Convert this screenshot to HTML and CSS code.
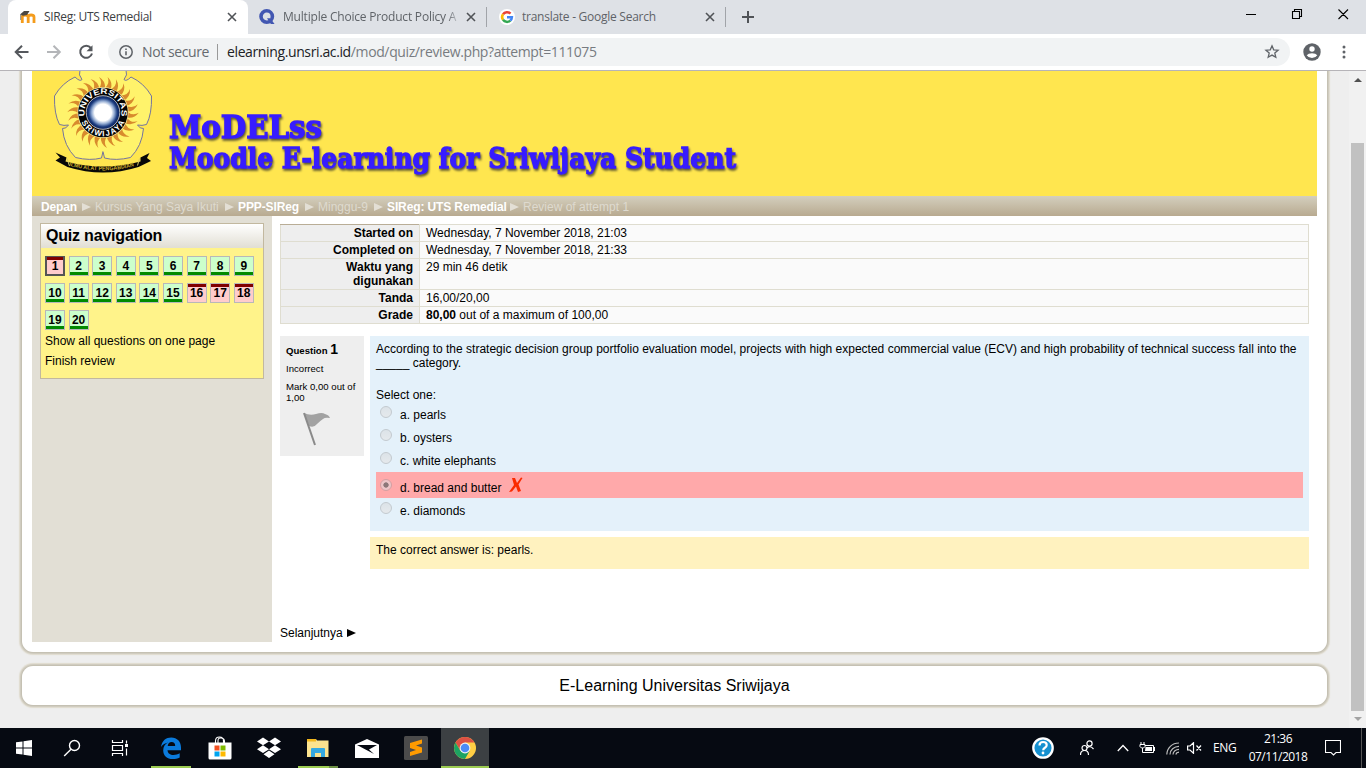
FILE: index.html
```html
<!DOCTYPE html>
<html lang="en">
<head>
<meta charset="utf-8">
<title>SIReg: UTS Remedial</title>
<link rel="stylesheet" href="styles.css">
</head>
<body>
<div class="tabstrip">
  <div class="tab active">
    <svg class="fav" width="16" height="16" viewBox="0 0 16 16"><path d="M2.300 14V8q0-2 2.900-2T8.200 8v6M8.200 14V8q0-2 2.900-2t2.900 2v6" fill="none" stroke="#f49c1c" stroke-width="2.800"/><path d="M0 5.500L4 2l5.500 0L7 6l-4 .8z" fill="#4b4742"/><path d="M.700 5v6" stroke="#888"/></svg>
    <span class="tab-title t1">SIReg: UTS Remedial</span>
    <svg class="x" width="10" height="10" viewBox="0 0 10 10"><path d="M1 1l8 8M9 1L1 9"/></svg>
  </div>
  <div class="tab second">
    <svg class="fav" width="16" height="16" viewBox="0 0 16 16"><circle cx="7.7" cy="7.5" r="5.7" fill="none" stroke="#4257b2" stroke-width="3.6"/><path d="M8 9.2h3.2l4.400 5.800h-3.800z" fill="#4257b2"/></svg>
    <span class="tab-title t2">Multiple Choice Product Policy A</span>
    <svg class="x" width="10" height="10" viewBox="0 0 10 10"><path d="M1 1l8 8M9 1L1 9"/></svg>
  </div>
  <div class="tab third">
    <svg class="fav" width="16" height="16" viewBox="0 0 16 16"><circle cx="8" cy="8" r="8" fill="#fff"/><g fill="none" stroke-width="2.5"><path d="M4 5.2A4.9 4.9 0 0 1 11.5 4.6" stroke="#ea4335"/><path d="M4 5.2a5 5 0 0 0 0 5.6" stroke="#fbbc05"/><path d="M4 10.8a4.9 4.9 0 0 0 7.3.8" stroke="#34a853"/><path d="M8 8.2h4.9a4.8 4.8 0 0 1-1.6 3.4" stroke="#4285f4"/></g></svg>
    <span class="tab-title t3">translate - Google Search</span>
    <svg class="x" width="10" height="10" viewBox="0 0 10 10"><path d="M1 1l8 8M9 1L1 9"/></svg>
  </div>
  <svg class="plus" width="12" height="12" viewBox="0 0 12 12"><path d="M6 0v12M0 6h12" stroke="#505357" stroke-width="2"/></svg>
  <svg class="winctl" width="108" height="12" viewBox="0 0 108 12"><path d="M0 6.500h10M46.500 3.500h7v7h-7zM48.500 3.500v-2h7v7h-2M92.500 1.500l9.500 9.500M102 1.500L92.500 11" fill="none" stroke="#000" stroke-width="1.100"/></svg>
</div>
<div class="toolbar">
  <svg class="navs" width="82" height="18" viewBox="0 0 82 18" fill="none" stroke-width="2"><path d="M14.500 9H2M8 2.700L1.700 9 8 15.300" stroke="#55585d"/><path d="M33 9h12.500M39.500 2.700L45.800 9l-6.300 6.300" stroke="#b4b6b9"/><path d="M76.900 5A6 6 0 1 0 78 10.500" stroke="#55585d"/><path d="M78.500 2.200v6h-6z" fill="#55585d"/></svg>
  <div class="omnibox">
    <svg class="info" width="16" height="16" viewBox="0 0 16 16"><circle cx="8" cy="8" r="6.200" fill="none" stroke="#5f6368" stroke-width="1.500"/><path d="M8 7.200v4M8 4.500v1.600" stroke="#5f6368" stroke-width="1.600"/></svg>
    <span class="secure">Not secure</span><i class="sep"></i>
    <span class="url"><b>elearning.unsri.ac.id</b>/mod/quiz/review.php?attempt=111075</span>
    <svg class="star" width="16" height="16" viewBox="0 0 16 16"><path d="M8 1.800l1.700 4 4.400.4-3.300 2.900 1 4.200L8 11.100l-3.800 2.200 1-4.200L1.900 6.200l4.400-.4z" fill="none" stroke="#5f6368" stroke-width="1.300"/></svg>
  </div>
  <svg class="user" width="18" height="18" viewBox="0 0 18 18"><circle cx="9" cy="9" r="8.700" fill="#5f6368"/><circle cx="9" cy="6" r="2.700" fill="#fff"/><path d="M3.700 12.200q1.500-2 5.300-2t5.300 2q-1.800 2.800-5.300 2.800t-5.300-2.800z" fill="#fff"/></svg>
  <svg class="dots" width="4" height="14" viewBox="0 0 4 14" fill="#5f6368"><circle cx="2" cy="2" r="1.500"/><circle cx="2" cy="7" r="1.500"/><circle cx="2" cy="12" r="1.500"/></svg>
</div>
<div class="view">
  <div class="page">
    <div class="card main">
      <svg class="banner" width="1285" height="125" viewBox="32 71 1285 125">
        <defs><radialGradient id="sun"><stop offset="0" stop-color="#fff"/><stop offset=".5" stop-color="#fff"/><stop offset=".68" stop-color="#8fa8d0"/><stop offset=".85" stop-color="#1b3c80"/><stop offset="1" stop-color="#0b2058"/></radialGradient>
        <path id="arcTop" d="M85.600 118.800A18.500 18.500 0 1 1 120.400 118.800"/><path id="arcBot" d="M79.300 112.500A23.700 23.700 0 0 0 126.700 112.500"/><path id="motto" d="M69 165.500Q103 175.500 138 165"/>
        <path id="petals" d="M80 70Q78 75 82 79.500 80 82 75 77 62 83 54.500 96 54 114 59.500 124.500 64 126 68.500 125 66 129 62.500 128.500 64 146 75.500 157.500 90 161 101.500 158L103 151.500"/></defs>
        <g id="half"><path d="M103 70H80Q78 75 82 79.500 80 82 75 77 62 83 54.500 96 54 114 59.500 124.500 64 126 68.500 125 66 129 62.500 128.500 64 146 75.500 157.500 90 161 101.500 158L103.200 151.500V70z" fill="#fff36b"/><use href="#petals" fill="none" stroke="#74749f"/></g>
        <use href="#half" transform="translate(206 0) scale(-1 1)"/>
        <g fill="#d88b2d"><g id="r4"><g id="r1"><path id="ray" d="M98.500 89q5-6 .500-12 7 4 6 12z"/><use href="#ray" transform="rotate(13.850 103 112.500)"/></g><use href="#r1" transform="rotate(27.700 103 112.500)"/></g><use href="#r4" transform="rotate(55.400 103 112.500)"/><use href="#r4" transform="rotate(110.800 103 112.500)"/><use href="#r4" transform="rotate(166.200 103 112.500)"/><use href="#r4" transform="rotate(221.600 103 112.500)"/><use href="#r4" transform="rotate(277 103 112.500)"/><use href="#r1" transform="rotate(332.400 103 112.500)"/></g>
        <circle cx="103" cy="112.500" r="25.500" fill="#fff3a0"/><circle cx="103" cy="112.500" r="24.800" fill="#050505"/><circle cx="103" cy="112.500" r="16.800" fill="url(#sun)" stroke="#ddd" stroke-width=".8"/>
        <g class="seal"><text><textPath href="#arcTop" startOffset="50%" text-anchor="middle" textLength="65" lengthAdjust="spacingAndGlyphs">UNIVERSITAS</textPath></text><text><textPath href="#arcBot" startOffset="50%" text-anchor="middle" textLength="54">SRIWIJAYA</textPath></text></g>
        <path d="M55.500 152.500l11 5-1 4q37.500 10 75 0v-4l9-4.500-2.500 5 4 3-12.500 6q-35.500 11-71 0l-12-6.500 4.500-3z" fill="#080808"/><path d="M67 158.500l2.500 7.500M139.500 158.500l-2 7" stroke="#d7ca69"/>
        <text class="motto"><textPath href="#motto" textLength="66" lengthAdjust="spacingAndGlyphs">ILMU ALAT PENGABDIAN</textPath></text>
        <g class="brand"><text x="169" y="138" font-size="31" textLength="153" lengthAdjust="spacingAndGlyphs">MoDELss</text><text x="169" y="168" font-size="28" textLength="567" lengthAdjust="spacingAndGlyphs">Moodle E-learning for Sriwijaya Student</text></g>
      </svg>
      <nav class="crumbs"><b class="c1">Depan</b><i></i><span class="c2">Kursus Yang Saya Ikuti</span><i></i><b class="c3">PPP-SIReg</b><i></i><span class="c4">Minggu-9</span><i></i><b class="c5">SIReg: UTS Remedial</b><i></i><span class="c6">Review of attempt 1</span></nav>
      <div class="cols">
        <aside>
          <div class="block">
            <h2>Quiz navigation</h2>
            <div class="blockbody">
              <div class="qn"><a class="bad cur">1</a><a>2</a><a>3</a><a>4</a><a>5</a><a>6</a><a>7</a><a>8</a><a>9</a><a>10</a><a>11</a><a>12</a><a>13</a><a>14</a><a>15</a><a class="bad">16</a><a class="bad">17</a><a class="bad">18</a><a>19</a><a>20</a></div>
              <div class="lnk">Show all questions on one page</div>
              <div class="lnk">Finish review</div>
            </div>
          </div>
        </aside>
        <main>
          <table>
            <tr><th>Started on</th><td>Wednesday, 7 November 2018, 21:03</td></tr>
            <tr><th>Completed on</th><td>Wednesday, 7 November 2018, 21:33</td></tr>
            <tr><th>Waktu yang<br>digunakan</th><td>29 min 46 detik</td></tr>
            <tr><th>Tanda</th><td>16,00/20,00</td></tr>
            <tr><th>Grade</th><td><b>80,00</b> out of a maximum of 100,00</td></tr>
          </table>
          <div class="question">
            <div class="qinfo">
              <div class="qno">Question <span>1</span></div>
              <div class="state">Incorrect</div>
              <div class="mark">Mark 0,00 out of<br>1,00</div>
              <svg class="flag" width="30" height="34" viewBox="0 0 30 34"><path d="M2 1q6 3 12 1 6-2 9 0 4 1 5 4-5-1-7 1-3 2-6 5-3 4-8 2z" fill="#a2a2a2"/><path d="M2 1l11 32" stroke="#8a8a8a" stroke-width="2"/></svg>
            </div>
            <div class="qbody">
              <div class="formulation">
                <p><span class="qtext">According to the strategic decision group portfolio evaluation model, projects with high expected commercial value (ECV) and high probability of technical success fall into the</span><br>_____ category.</p>
                <div class="select">Select one:</div>
                <div class="opt"><i class="radio"></i><span>a. pearls</span></div>
                <div class="opt"><i class="radio"></i><span>b. oysters</span></div>
                <div class="opt"><i class="radio"></i><span>c. white elephants</span></div>
                <div class="opt wrong"><i class="radio on"></i><span>d. bread and butter</span><svg class="cross" width="14" height="16" viewBox="0 0 14 16"><path d="M3 1h3l2 5 4-5.500 1.500.5-4 6.500 2.500 6.500-3 1-2-5.500L3 14.500l-3 .5 5-7z" fill="#fa2b00"/></svg></div>
                <div class="opt last"><i class="radio"></i><span>e. diamonds</span></div>
              </div>
              <div class="outcome">The correct answer is: pearls.</div>
            </div>
          </div>
          <div class="next">Selanjutnya <i></i></div>
        </main>
      </div>
    </div>
    <div class="card foot"><span>E-Learning Universitas Sriwijaya</span></div>
  </div>
  <div class="scroll"><i class="up"></i><div class="thumb"></div><i class="down"></i></div>
</div>
<footer class="taskbar">
  <div class="app"><svg width="16" height="16" viewBox="0 0 16 16" fill="#fff"><path d="M0 2.300L6.500 1.400V7.500H0zM7.500 1.200L16 0v7.500H7.500zM0 8.500h6.500v6.100L0 13.700zM7.500 8.500H16V16l-8.500-1.200z"/></svg></div>
  <div class="app"><svg width="18" height="18" viewBox="0 0 18 18" fill="none" stroke="#fff" stroke-width="1.400"><circle cx="11.500" cy="6.500" r="5"/><path d="M8 10.200L1.200 17"/></svg></div>
  <div class="app"><svg width="18" height="18" viewBox="0 0 18 18" fill="none" stroke="#fff" stroke-width="1.200"><path d="M1.500 1v2.500h10V1M1.500 17v-2.500h10V17M1.500 6.500h10v5h-10zM15.500 1.500v3M15.500 9.500v7"/><path d="M14 5h3v3h-3z" fill="#fff" stroke="none"/></svg></div>
  <div class="app edge on"><svg width="22" height="22" viewBox="0 0 22 22"><path d="M1 10C2 3.500 6 .5 11.200.5c6 0 9.800 4.300 9.800 10v2.700H7.500c.2 3.200 2.700 4.700 6 4.700 2.300 0 4.300-.6 6.200-1.700v4.300c-2 1.100-4.500 1.500-7 1.500-5.700 0-9.500-3.400-9.500-8.600 0-3.600 1.900-6.300 4.900-7.800C5 6.300 2.800 7.700 1 10zM7.700 9h7.500c0-2.600-1.300-4-3.600-4-2.200 0-3.500 1.500-3.900 4z" fill="#0b7bdc"/></svg></div>
  <div class="app store"><svg width="24" height="24" viewBox="0 0 24 24"><path d="M7.500 7V5q0-4 4-4t4 4v2M10 7V4.500q0-3 3.500-2.500 3 .5 3 3.500V7" fill="none" stroke="#fff" stroke-width="1.100"/><path d="M.5 6.500h23V22q0 1.500-1.500 1.500H2Q.5 23.500.5 22z" fill="#fff"/><path fill="#f25022" d="M6.500 9.500h5v5h-5z"/><path fill="#7fba00" d="M12.500 9.500h5v5h-5z"/><path fill="#00a4ef" d="M6.500 15.500h5v5h-5z"/><path fill="#ffb900" d="M12.500 15.500h5v5h-5z"/></svg></div>
  <div class="app drop"><svg width="24" height="22" viewBox="0 0 24 22" fill="#fff"><path d="M6 .5l6 3.900-6 3.900L0 4.400zM18 .5l6 3.900-6 3.900-6-3.900zM6 8.300l6 3.900-6 3.900-6-3.900zM18 8.300l6 3.900-6 3.900-6-3.900zM12 13.500l5.500 3.800L12 21l-5.500-3.700z"/></svg></div>
  <div class="app files on"><svg width="22" height="19" viewBox="0 0 22 19"><path d="M0 0h9l1 1.500h11.500V18H0z" fill="#fce38f"/><path d="M0 0h9v2.500H0z" fill="#f2b71d"/><path d="M4 18v-8q0-1 1-1h12q1 0 1 1v8h-4v-4H8v4z" fill="#35a9e1"/></svg></div>
  <div class="app mail"><svg width="24" height="19" viewBox="0 0 24 19"><path d="M0 5.500L12 0l12 5.500V19H0z" fill="#fff"/><path d="M2 6H22L14 10.500l5 4.500z" fill="#060a12"/></svg></div>
  <div class="app subl"><svg width="24" height="24" viewBox="0 0 24 24"><rect width="24" height="24" rx="1.500" fill="#4b4b4b"/><path d="M6 7l12-3.500v4L12 9.500l6 2V16.500L6 20v-4l6-2-6-2z" fill="#ff9b00"/></svg></div>
  <div class="app chrome on"><svg width="22" height="22" viewBox="0 0 22 22"><circle cx="11" cy="11" r="11" fill="#ffce44"/><path d="M1.500 5.500A11 11 0 0 1 20.500 5.500H11L6.300 13.500z" fill="#dd5144"/><path d="M1.500 5.500A11 11 0 0 0 11 22l4.700-8.300-4.700 2.300-4.800-2.600z" fill="#1da362"/><circle cx="11" cy="11" r="5.400" fill="#f1f1f1"/><circle cx="11" cy="11" r="4.300" fill="#4c8bf5"/></svg></div>
  <div class="tray">
    <svg class="help" width="22" height="22" viewBox="0 0 22 22"><circle cx="11" cy="11" r="9.700" fill="#1590d0" stroke="#fff" stroke-width="2.300"/><path d="M7.500 8.500q0-3.500 3.600-3.500t3.600 3q0 1.700-1.800 2.800-1.700 1-1.700 2.500" fill="none" stroke="#fff" stroke-width="2.200"/><circle cx="11" cy="16" r="1.400" fill="#fff"/></svg>
    <svg class="people" width="15" height="16" viewBox="0 0 15 16" fill="none" stroke="#fff" stroke-width="1.200"><circle cx="9.500" cy="3.500" r="2.600"/><path d="M7 8q3-3 6.500 1"/><circle cx="4.500" cy="8" r="2.500"/><path d="M.5 15q0-4.500 4-4.500t4 4.500"/></svg>
    <svg class="chev" width="12" height="8" viewBox="0 0 12 8"><path d="M.8 7L6 1.500 11.200 7" fill="none" stroke="#fff" stroke-width="1.300"/></svg>
    <svg class="bat" width="16" height="12" viewBox="0 0 16 12"><path d="M2 0v2M5 0v2M1 2.500h5v2l-1.500 1.500h-2L1 4.500zM3.500 6v4.500M6 3.500h8.500v7H3.500M15.500 5v4" fill="none" stroke="#fff"/><path d="M6.500 5H13v4H6z" fill="#fff"/></svg>
    <svg class="wifi" width="14" height="13" viewBox="0 0 14 13" fill="none" stroke="#bbb" stroke-width="1.200"><path d="M.8 12.500C1 6 6 1 13 1M4 12.500C4 8 8 4.300 13 4.300M7 12.500c0-3 3-5.200 6-5.200M9.800 12.500q.5-2 3.200-2.300"/></svg>
    <svg class="vol" width="15" height="12" viewBox="0 0 15 12" fill="none" stroke="#fff" stroke-width="1.200"><path d="M.6 4H3l3.500-3.300v10.600L3 8H.6zM9.500 3.500l4.500 5M14 3.500l-4.500 5"/></svg>
    <span class="eng">ENG</span>
    <div class="clock"><span>21:36</span><span>07/11/2018</span></div>
    <svg class="note" width="16" height="16" viewBox="0 0 16 16"><path d="M.5.5h15v12H11L8.500 15 6 12.500H.5z" fill="none" stroke="#fff" stroke-width="1.100"/></svg>
  </div>
</footer>
</body>
</html>
```
FILE: styles.css
```css
*{box-sizing:border-box}
body{margin:0;width:1366px;height:768px;overflow:hidden;display:flex;flex-direction:column;font:12px/14px "Liberation Sans",Arial,sans-serif;color:#000}
svg{display:block;flex:none}
.tabstrip{height:34px;background:#dee1e6;display:flex;flex:none;padding-left:8px;font:12px/16px "Open Sans","Noto Sans",sans-serif;color:#5f6368}
.tab{display:flex;align-items:center;height:34px;padding-left:12px;white-space:nowrap}
.tab.active{width:240px;background:#fff;border-radius:8px 8px 0 0;color:#3c4043}
.tab.second{width:239px;padding-left:11px}
.tab.third{width:239px;position:relative}
.tab.third::before,.tab.third::after{content:"";width:1px;height:20px;background:#a1a4a9;position:absolute;left:-1px;top:7px}
.tab.third::after{left:238px}
.tab-title{margin-left:8px;overflow:hidden;flex:none}
.t1{width:183px;letter-spacing:-.33px}
.t2{width:183px;letter-spacing:-.2px;-webkit-mask-image:linear-gradient(90deg,#000 90%,transparent 97%)}
.t3{width:183px;letter-spacing:-.26px}
.third .tab-title{margin-left:7px}
.x{fill:none;stroke:#505357;stroke-width:1.6}
.plus{margin:11px 0 0 16px}
.winctl{margin:8px 12px 0 auto}
.toolbar{height:37px;background:#fff;border-bottom:1px solid #b6b4b8;display:flex;flex:none;align-items:center;font:14px/20px "Open Sans","Noto Sans",sans-serif}
.navs{margin-left:14px}
.omnibox{margin-left:12px;width:1182px;height:28px;border-radius:14px;background:#f1f3f4;display:flex;align-items:center;padding-left:10px;white-space:nowrap;color:#777b80}
.secure{width:68px;margin-left:8px;letter-spacing:-.4px;color:#666a6f}
.sep{width:1px;height:16px;background:#999;margin:0 9px 0 7px}
.url{letter-spacing:-.38px}
.url b{font-weight:400;color:#202124}
.star{margin:0 10px 0 auto}
.user{margin-left:13px}
.dots{margin-left:21px}
.view{height:657px;flex:none;display:flex;background:#eee;overflow:hidden}
.page{width:1349px;padding:0 22px}
.card{background:#fff;box-shadow:0 0 0 1px #c5c1b3,0 0 0 2px #d0ccc0,0 0 1px 3px #dfdbce}
.main{height:581px;border-radius:0 0 11px 11px;padding:0 10px}
.foot{height:39px;margin-top:14px;border-radius:11px;display:flex;align-items:center;justify-content:center;font-size:16px}
.banner{background:#ffe64f}
.seal{font:bold 8px "Liberation Sans",Arial,sans-serif;fill:#fff}
.motto{font:bold 5.5px "Liberation Sans",Arial,sans-serif;fill:#c7a72c}
.brand{font-family:"DejaVu Serif",serif;font-weight:700;fill:#371cff;stroke:#371cff;stroke-width:1.3px;filter:drop-shadow(1px 2px 1px #5b5530)}
.crumbs{height:20px;background:linear-gradient(#d4cfbe,#b8aa90);padding:2px 0 0 9px;display:flex;align-items:center;color:#dedacf;white-space:nowrap}
.crumbs b{color:#fff;letter-spacing:-.12px}
.crumbs b,.crumbs span{flex:none}
.crumbs i{border-left:9px solid #e3dfd5;border-top:4px solid transparent;border-bottom:4px solid transparent;margin:0 4px 0 5px}
.c1{width:36px}.c2{width:125px}.c3{width:62px}.c4{width:51px}.c5{width:118px}.c6{width:110px}
.cols{display:flex;height:426px}
aside{width:240px;background:#e2dfd5;padding:7px 8px}
.block{width:224px;height:156px;border:1px solid #c2b89f;background:#fff38a}
h2{margin:0;height:24px;font-size:16px;line-height:23px;padding-left:5px;letter-spacing:-.2px;background:linear-gradient(#fff,#e1ded3)}
.blockbody{padding:8px 0 0 4px}
.qn{display:grid;grid-template-columns:repeat(9,20px);column-gap:3.6px;row-gap:7px}
.qn a{height:20px;border:1px solid #b8b8b8;background:linear-gradient(#cfc 15px,#008a00 15px);font-weight:700;text-align:center;line-height:18px}
.qn .bad{background:linear-gradient(#800000 3px,#fcc 3px)}
.qn .cur{border:2px solid #555;border-top-width:1px;line-height:18px}
.lnk{height:20px;line-height:22px}
main{padding:8px 8px 0;flex:1}
table{width:1029px;height:100px;border-collapse:collapse;background:#fafafa;table-layout:fixed}
th,td{border:1px solid #dfddd0;padding:1px 6px;vertical-align:top;text-align:left;font-size:12px;line-height:14px}
th{width:139px;text-align:right;background:#eee}
tr:first-child th{border-top-color:#b9ad96}
.question{display:flex;gap:6px;margin-top:12px}
.qinfo{width:84px;height:120px;background:#eee;padding:6px;font-size:9.6px;line-height:12px}
.qno{font-weight:700;height:20px;font-size:9.6px;line-height:14px;white-space:nowrap}
.qno span{font-size:14px}
.state{height:17px;line-height:14px}
.mark{line-height:11px;margin-top:2px;white-space:nowrap}
.flag{margin:9px 0 0 16px}
.qbody{width:939px}
.formulation{height:195px;background:#e4f1fa;padding:6px}
p{margin:0;white-space:nowrap}
.select{margin-top:18px;height:14px;line-height:14px}
.opt{height:23px;display:flex;align-items:flex-start;padding-left:4px;line-height:14px}
.opt span{margin:6px 0 0 8px}
.radio{width:12px;height:12px;border:1px solid #c3cacf;border-radius:50%;background:linear-gradient(#dce3e8,#e5e9ec);margin-top:4px}
.opt.wrong{height:26px;background:#ffa9aa;margin-top:1px}
.wrong .radio{margin-top:7px;border-color:#d3a0a3;background:radial-gradient(circle,#8b7779 0 2.3px,#ecc5c8 3px)}
.opt.wrong span{margin-top:9px}
.opt.last span{margin-top:6px}
.cross{margin:5px 0 0 8px}
.outcome{height:32px;background:#fff2bf;margin-top:6px;padding:6px}
.next{margin-top:57px;display:flex;align-items:center}
.next i{border-left:9px solid #000;border-top:4px solid transparent;border-bottom:4px solid transparent;margin-left:4px}
.scroll{width:17px;background:#f1f1f1;display:flex;flex-direction:column;align-items:center;height:657px;padding:7px 0 7px;flex:none}
.up,.down{border-left:4px solid transparent;border-right:4px solid transparent}
.up{border-bottom:4px solid #505050}
.down{border-top:4px solid #a3a3a3;margin-top:auto}
.thumb{width:13px;height:568px;background:#c1c1c1;margin-top:61px}
.taskbar{height:40px;flex:none;background:#060a12;display:flex;color:#fff;font-family:"Open Sans","Noto Sans",sans-serif}
.app{width:48px;display:flex;align-items:center;justify-content:center;height:40px;flex:none}
.app.edge{margin-left:3px}
.app.on{position:relative}
.app.on::after{content:"";position:absolute;bottom:0;left:4px;width:40px;height:2px;background:#9ccc52}
.app.store{width:49px}.app.drop{width:50px}
.app.files.on::after{background:linear-gradient(90deg,#9ccc52 31px,#6d9145 31px)}
.app.mail{width:50px}.app.subl{width:48px}
.app.chrome{background:#3c4043;width:48px;margin-left:1px}
.app.chrome.on::after{left:0;width:48px}
.tray{display:flex;align-items:center;flex:1;padding-left:543px;border-right:1px solid #555;margin-right:4px;white-space:nowrap;font-size:12px}
.people{margin-left:26px}.chev{margin-left:22px}.bat{margin-left:10px}.wifi{margin-left:11px}.vol{margin-left:7px}.eng{margin-left:11px;width:24px;letter-spacing:-.4px}
.clock{margin-left:11px;width:60px;display:flex;flex-direction:column;align-items:center;line-height:18px;letter-spacing:-.5px}
.note{margin-left:17px}
```
